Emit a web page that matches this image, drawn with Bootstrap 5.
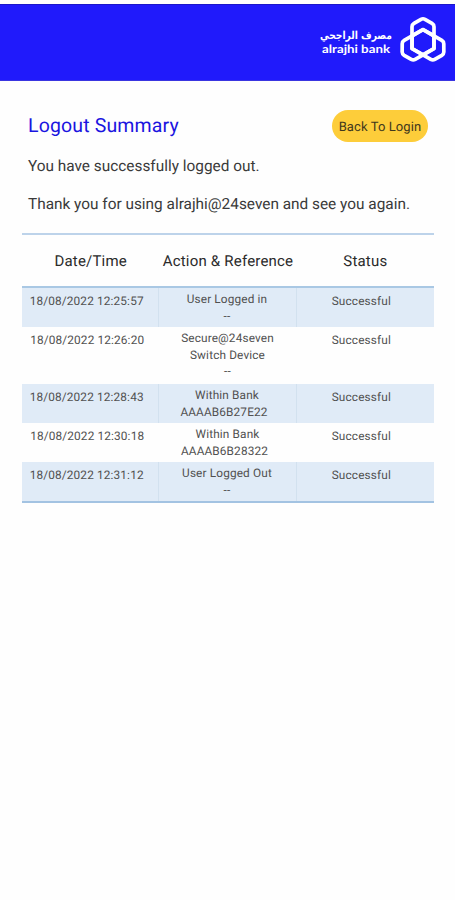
<!DOCTYPE html>
<html lang="en">
<head>
<meta charset="utf-8">
<meta name="viewport" content="width=device-width, initial-scale=1">
<title>Logout Summary</title>
<link href="https://cdn.jsdelivr.net/npm/bootstrap@5.3.0/dist/css/bootstrap.min.css" rel="stylesheet">
<style>
body{font-family:Roboto,"Liberation Sans",sans-serif;color:#3a3a3a;background:#fefefe;overflow-x:hidden;text-rendering:geometricPrecision}
.topbar{height:77px;margin-top:4px;background:#201afb;border-top:1px solid #1b16c9;border-bottom:1px solid #3a35e0}
.content{padding:28px 21px 0 22px}
.intro{padding-left:6px}
.title{font-size:19.5px;line-height:32px;color:#1a14e0;letter-spacing:.15px;padding-top:1px}
.back{background:#fdcd3a;color:#40371c;width:96px;height:32px;font-size:13px;line-height:33px;padding:1px 0 0;letter-spacing:.1px;margin-right:6px}
.back:hover{background:#f5c22b}
.msg{font-size:15.38px;line-height:24px;margin:0 0 14px;white-space:nowrap}
.msg:first-child{padding-top:12px}
.log{table-layout:fixed;width:412px;margin-top:17px;border-top:2px solid #bdd3ea;border-bottom:2px solid #a3c3e2;font-size:11.8px;line-height:16.5px;letter-spacing:.15px;color:#505050;border-collapse:separate;border-spacing:0}
.log th{font-size:15px;font-weight:400;color:#2b2b2b;height:53px;border-bottom:2px solid #a9c8e4;white-space:nowrap;letter-spacing:.2px;padding:1px 0 0}
.log td{height:39px;padding:3px 1px 0 0;white-space:nowrap}
.log td:first-child{padding:5px 7px 0 0}
.log td:last-child{padding:5px 8px 0 0}
.log tr.tall td{height:57px}
.log .tint td{background:#e0ebf7}
.log .tint td:not(:last-child){border-right:1px solid #d2e1ef}
.log .ref-no{padding-right:6px}
</style>
<script src="https://cdn.jsdelivr.net/npm/bootstrap@5.3.0/dist/js/bootstrap.bundle.min.js"></script>
</head>
<body>
<header class="topbar d-flex justify-content-end">
<svg width="140" height="75" viewBox="315 5 140 75" role="img" aria-label="alrajhi bank">
<g fill="#fff" font-weight="700">
<text x="356" y="39" text-anchor="middle" direction="rtl" font-family="DejaVu Sans, sans-serif" font-size="11" textLength="72" lengthAdjust="spacingAndGlyphs">مصرف الراجحي</text>
<text x="322" y="52.5" font-family="Lato, sans-serif" font-size="11.5" textLength="68" lengthAdjust="spacingAndGlyphs">alrajhi bank</text>
</g>
<defs><path id="loop" d="M-2-22.9Q0-24 2-22.9L9-18.8Q11-17.6 11-15.4V6.3L0 12.6L-11 6.3V-15.4Q-11-17.6-9-18.8Z"/></defs>
<g transform="translate(423 42.2)" fill="none" stroke="#fff" stroke-width="3.7" stroke-linejoin="round">
<use href="#loop"/><use href="#loop" transform="rotate(120)"/><use href="#loop" transform="rotate(240)"/>
</g>
</svg>
</header>
<main class="content">
<div class="intro d-flex justify-content-between align-items-center">
<h1 class="title fw-normal m-0">Logout Summary</h1>
<a href="#" class="btn back rounded-pill border-0">Back To Login</a>
</div>
<div class="intro">
<p class="msg">You have successfully logged out.</p>
<p class="msg">Thank you for using alrajhi@24seven and see you again.</p>
</div>
<table class="log text-center align-top">
<thead><tr><th class="align-middle">Date/Time</th><th class="align-middle">Action &amp; Reference</th><th class="align-middle">Status</th></tr></thead>
<tbody class="align-top">
<tr class="tint"><td>18/08/2022 12:25:57</td><td>User Logged in<br>--</td><td>Successful</td></tr>
<tr class="tall"><td>18/08/2022 12:26:20</td><td>Secure@24seven<br>Switch Device<br>--</td><td>Successful</td></tr>
<tr class="tint"><td>18/08/2022 12:28:43</td><td>Within Bank<br><span class="ref-no">AAAAB6B27E22</span></td><td>Successful</td></tr>
<tr><td>18/08/2022 12:30:18</td><td>Within Bank<br><span class="ref-no">AAAAB6B28322</span></td><td>Successful</td></tr>
<tr class="tint"><td>18/08/2022 12:31:12</td><td>User Logged Out<br>--</td><td>Successful</td></tr>
</tbody>
</table>
</main>
</body>
</html>
